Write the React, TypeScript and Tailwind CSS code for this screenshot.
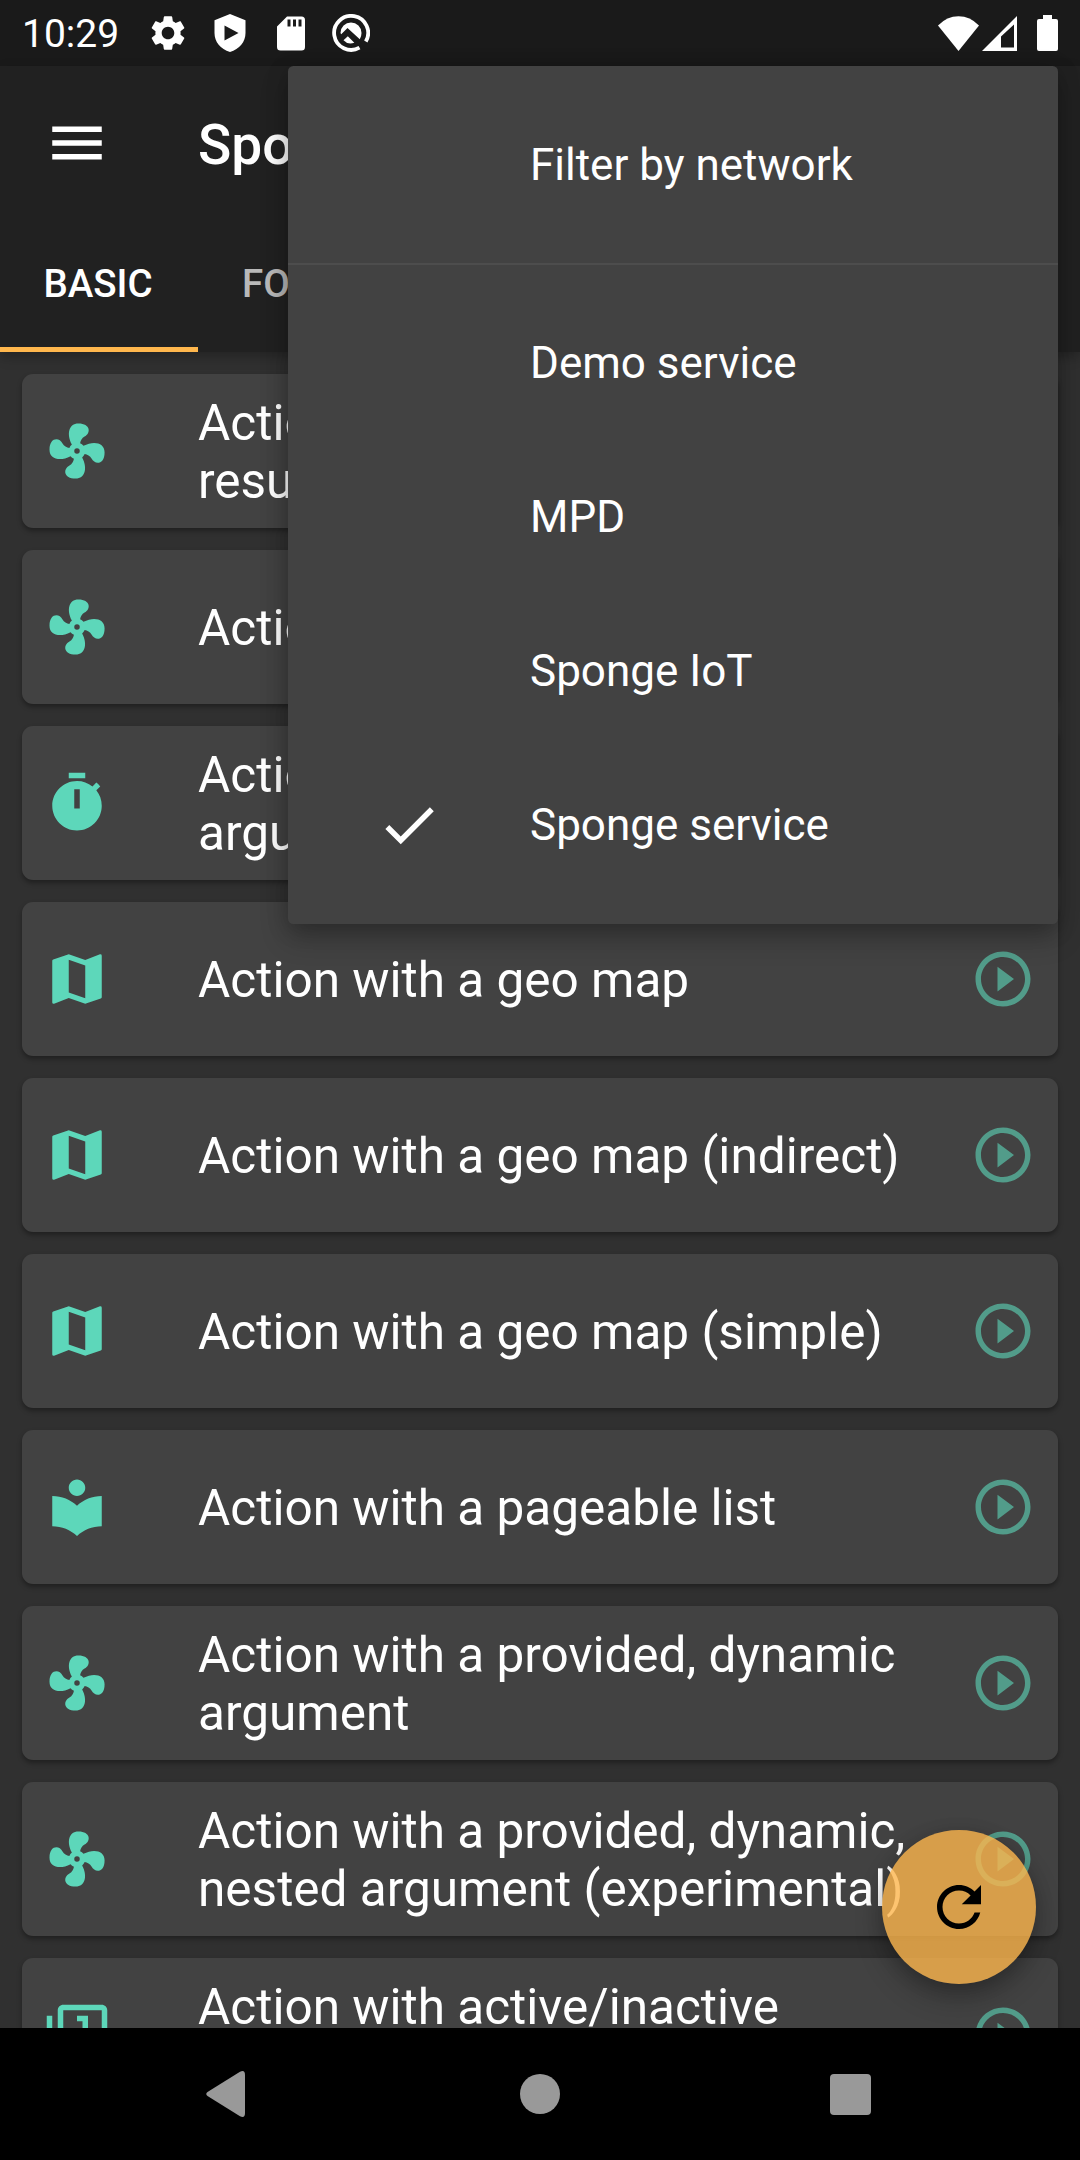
import type { ReactNode } from 'react';

const paths = {
  fan: 'M12,11A1,1 0 0,0 11,12A1,1 0 0,0 12,13A1,1 0 0,0 13,12A1,1 0 0,0 12,11M12.5,2C17,2 17.11,5.57 14.75,6.75C13.76,7.24 13.32,8.29 13.13,9.22C13.61,9.42 14.03,9.73 14.35,10.13C18.05,8.13 22.03,8.92 22.03,12.5C22.03,17 18.46,17.1 17.28,14.73C16.78,13.74 15.72,13.3 14.79,13.11C14.59,13.59 14.28,14 13.88,14.34C15.87,18.03 15.08,22 11.5,22C7,22 6.91,18.42 9.27,17.24C10.25,16.75 10.69,15.71 10.89,14.79C10.4,14.59 9.97,14.27 9.65,13.87C5.96,15.85 2,15.07 2,11.5C2,7 5.56,6.89 6.74,9.26C7.24,10.25 8.29,10.68 9.22,10.87C9.41,10.39 9.73,9.97 10.14,9.65C8.15,5.96 8.94,2 12.5,2Z',
  timer:
    'M19.03 7.39L20.45 5.97C20 5.46 19.55 5 19.04 4.56L17.62 6C16.07 4.74 14.12 4 12 4C7.03 4 3 8.03 3 13S7.03 22 12 22C17 22 21 17.97 21 13C21 10.88 20.26 8.93 19.03 7.39M13 14H11V7H13V14M15 1H9V3H15V1Z',
  map: 'M15,19L9,16.89V5L15,7.11M20.5,3C20.44,3 20.39,3 20.34,3L15,5.1L9,3L3.36,4.9C3.15,4.97 3,5.15 3,5.38V20.5A0.5,0.5 0 0,0 3.5,21C3.55,21 3.61,21 3.66,20.97L9,18.9L15,21L20.64,19.1C20.85,19 21,18.85 21,18.62V3.5A0.5,0.5 0 0,0 20.5,3Z',
  reader:
    'M12 11.55C9.64 9.35 6.48 8 3 8v11c3.48 0 6.64 1.35 9 3.55 2.36-2.19 5.52-3.55 9-3.55V8c-3.48 0-6.64 1.35-9 3.55zM12 8c1.66 0 3-1.34 3-3s-1.34-3-3-3-3 1.34-3 3 1.34 3 3 3z',
  numbered:
    'M3 5H1v16c0 1.1.9 2 2 2h16v-2H3V5zm11 10h2V5h-4v2h2v8zm7-14H7c-1.1 0-2 .9-2 2v14c0 1.1.9 2 2 2h14c1.1 0 2-.9 2-2V3c0-1.1-.9-2-2-2zm0 16H7V3h14v14z',
  play: 'M10 16.5l6-4.5-6-4.5v9zM12 2C6.48 2 2 6.48 2 12s4.48 10 10 10 10-4.48 10-10S17.52 2 12 2zm0 18c-4.41 0-8-3.59-8-8s3.59-8 8-8 8 3.59 8 8-3.59 8-8 8z',
  menu: 'M3 18h18v-2H3v2zm0-5h18v-2H3v2zm0-7v2h18V6H3z',
  check: 'M9 16.17L4.83 12l-1.42 1.41L9 19 21 7l-1.41-1.41z',
  refresh:
    'M17.65 6.35C16.2 4.9 14.21 4 12 4c-4.42 0-7.99 3.58-7.99 8s3.57 8 7.99 8c3.73 0 6.84-2.55 7.73-6h-2.08c-.82 2.33-3.04 4-5.65 4-3.31 0-6-2.69-6-6s2.69-6 6-6c1.66 0 3.14.69 4.22 1.78L13 11h7V4l-2.35 2.35z',
  gear: 'M19.14 12.94c.04-.3.06-.61.06-.94 0-.32-.02-.64-.07-.94l2.03-1.58c.18-.14.23-.41.12-.61l-1.92-3.32c-.12-.22-.37-.29-.59-.22l-2.39.96c-.5-.38-1.03-.7-1.62-.94l-.36-2.54c-.04-.24-.24-.41-.48-.41h-3.84c-.24 0-.43.17-.47.41l-.36 2.54c-.59.24-1.13.57-1.62.94l-2.39-.96c-.22-.08-.47 0-.59.22L2.74 8.87c-.12.21-.08.47.12.61l2.03 1.58c-.05.3-.09.63-.09.94s.02.64.07.94l-2.03 1.58c-.18.14-.23.41-.12.61l1.92 3.32c.12.22.37.29.59.22l2.39-.96c.5.38 1.03.7 1.62.94l.36 2.54c.05.24.24.41.48.41h3.84c.24 0 .44-.17.47-.41l.36-2.54c.59-.24 1.13-.56 1.62-.94l2.39.96c.22.08.47 0 .59-.22l1.92-3.32c.12-.22.07-.47-.12-.61l-2.01-1.58zM12 15.6c-1.98 0-3.6-1.62-3.6-3.6s1.62-3.6 3.6-3.6 3.6 1.62 3.6 3.6-1.62 3.6-3.6 3.6z',
};

type IconName = keyof typeof paths;

function Icon({ name, className }: { name: IconName; className?: string }) {
  return (
    <svg viewBox="0 0 24 24" fill="currentColor" fillRule="evenodd" className={`size-[66px] shrink-0 ${className ?? ''}`}>
      <path d={paths[name]} />
    </svg>
  );
}

function StatusBar() {
  return (
    <header className="flex h-[66px] shrink-0 items-center bg-[#1a1a1a] px-[22px] text-white">
      <span className="w-[125px] pt-[2px] text-[39px] leading-[64px]">10:29</span>
      <svg viewBox="0 0 24 24" fill="currentColor" className="size-[42px] shrink-0">
        <path d={paths.gear} />
      </svg>
      <svg viewBox="0 0 32 38" className="ml-[25px] h-[38px] w-[32px] shrink-0">
        <path
          fill="currentColor"
          fillRule="evenodd"
          d="M16 0L31.5 6.2V19C31.5 28 25.5 35 16 38C6.500 35 .5 28 .5 19V6.200ZM10.500 11.500V26.500L24.500 19Z"
        />
      </svg>
      <svg viewBox="0 0 28 35" className="ml-[31px] h-[35px] w-[28px] shrink-0">
        <path
          fill="currentColor"
          fillRule="evenodd"
          d="M10 .5H24.500Q28 .5 28 4V31Q28 34.500 24.500 34.500H3.500Q0 34.500 0 31V10.500ZM10.500 3.500V10.500H13.500V3.500ZM16 3.500V10.500H19V3.500ZM21.500 3.500V10.500H24.500V3.500Z"
        />
      </svg>
      <svg viewBox="0 0 38 38" className="ml-[27px] size-[38px] shrink-0">
        <path d="M27.500 33.700A17 17 0 1 1 33.800 27.500" fill="none" stroke="currentColor" strokeWidth="3.800" />
        <path d="M8.500 19A10.500 10.500 0 0 1 29.500 19Q29.500 22.500 27.800 25.300L15.500 14L9.200 20.300Z" fill="currentColor" />
        <path d="M11.500 26.300L15.800 22.300L22.300 28.800Q16 31.200 11.500 26.300Z" fill="currentColor" />
        <path d="M24 25.500L31.500 33" stroke="#1a1a1a" strokeWidth="3" />
      </svg>
      <div className="grow" />
      <svg viewBox="0 0 41 35" className="h-[35px] w-[41px]">
        <path fill="currentColor" d="M0 9.500Q9 .3 20.500 .3T41 9.500L20.500 35Z" />
      </svg>
      <svg viewBox="0 0 35 35" className="ml-[3px] size-[35px]">
        <path fill="currentColor" fillRule="evenodd" d="M0 35L35 0V35ZM19 31.500H32V8.500L19 20.500Z" />
      </svg>
      <svg viewBox="0 0 21 36" className="ml-[20px] h-[36px] w-[21px]">
        <path fill="currentColor" d="M6 0H15V4H19Q21 4 21 6V34Q21 36 19 36H2Q0 36 0 34V6Q0 4 2 4H6Z" />
      </svg>
    </header>
  );
}

function AppBar() {
  return (
    <div className="z-10 shrink-0 bg-[#212121] shadow-[0_5px_11px_rgba(0,0,0,0.25)]">
      <div className="flex h-[154px] items-center px-[44px] text-white">
        <Icon name="menu" />
        <h1 className="ml-[88px] pt-[4px] text-[55px] leading-[64px] font-medium">Sponge</h1>
      </div>
      <nav className="flex h-[132px] text-[38.500px] font-medium">
        <div className="flex w-[198px] items-center justify-center border-b-[5.500px] border-[#ffb74d] pr-[2px] text-white">BASIC</div>
        <div className="flex items-center border-b-[5.500px] border-transparent px-[44px] text-white/70">FORMS</div>
      </nav>
    </div>
  );
}

const actions: { icon: IconName; label: ReactNode }[] = [
  { icon: 'fan', label: <>Action<br />result</> },
  { icon: 'fan', label: 'Action' },
  { icon: 'timer', label: <>Action<br />argument</> },
  { icon: 'map', label: 'Action with a geo map' },
  { icon: 'map', label: 'Action with a geo map (indirect)' },
  { icon: 'map', label: 'Action with a geo map (simple)' },
  { icon: 'reader', label: 'Action with a pageable list' },
  { icon: 'fan', label: <>Action with a provided, dynamic<br />argument</> },
  { icon: 'fan', label: <>Action with a provided, dynamic,<br />nested argument (experimental)</> },
  { icon: 'numbered', label: <>Action with active/inactive<br />&nbsp;</> },
];

function ActionCard({ icon, label }: { icon: IconName; label: ReactNode }) {
  return (
    <li className="flex h-[154px] shrink-0 items-center rounded-[11px] bg-[#424242] px-[22px] shadow-[0_3px_5px_rgba(0,0,0,0.35)]">
      <Icon name={icon} className="text-[#5dd7ba]" />
      <span className="ml-[88px] grow pt-[2px] text-[49.500px] leading-[58px] whitespace-nowrap text-white">{label}</span>
      <Icon name="play" className="text-[#529c8a]" />
    </li>
  );
}

function MenuItem({ label, checked }: { label: string; checked?: boolean }) {
  return (
    <div className="flex h-[154px] items-center px-[88px]">
      <div className="w-[154px] shrink-0">{checked && <Icon name="check" />}</div>
      <span className="text-[44px] leading-[52px]">{label}</span>
    </div>
  );
}

function NetworkMenu() {
  return (
    <div className="absolute top-[66px] right-[22px] z-20 w-[770px] rounded-[5.500px] bg-[#424242] py-[22px] text-white shadow-[0_14px_28px_rgba(0,0,0,0.24),0_4px_22px_rgba(0,0,0,0.18)]">
      <MenuItem label="Filter by network" />
      <div className="flex h-[44px] items-center">
        <div className="h-[2.750px] w-full bg-[#4d4d4d]" />
      </div>
      <MenuItem label="Demo service" />
      <MenuItem label="MPD" />
      <MenuItem label="Sponge IoT" />
      <MenuItem label="Sponge service" checked />
    </div>
  );
}

export default function App() {
  return (
    <div className="relative flex h-[2160px] w-[1080px] flex-col overflow-hidden bg-[#303030] font-['Roboto',sans-serif]">
      <StatusBar />
      <AppBar />
      <main className="relative min-h-0 grow overflow-hidden">
        <ul className="flex flex-col gap-[22px] px-[22px] pt-[22px]">
          {actions.map((action, index) => (
            <ActionCard key={index} {...action} />
          ))}
        </ul>
        <button className="absolute right-[44px] bottom-[44px] flex size-[154px] items-center justify-center rounded-full bg-[#fcb54c]/80 text-black shadow-[0_14px_28px_rgba(0,0,0,0.24),0_4px_18px_rgba(0,0,0,0.16)]">
          <Icon name="refresh" />
        </button>
      </main>
      <NetworkMenu />
      <footer className="flex h-[132px] shrink-0 items-center bg-black pr-[209px] pl-[206px]">
        <svg viewBox="0 0 39 46" className="h-[46px] w-[39px]">
          <path fill="#999" d="M1.500 21L34 .8Q39-1.500 39 4V42Q39 47.500 34 45.200L1.500 25Q-1 23 1.500 21Z" />
        </svg>
        <div className="ml-[275px] size-[40px] rounded-full bg-[#999]" />
        <div className="ml-auto size-[41px] rounded-[4px] bg-[#999]" />
      </footer>
    </div>
  );
}
